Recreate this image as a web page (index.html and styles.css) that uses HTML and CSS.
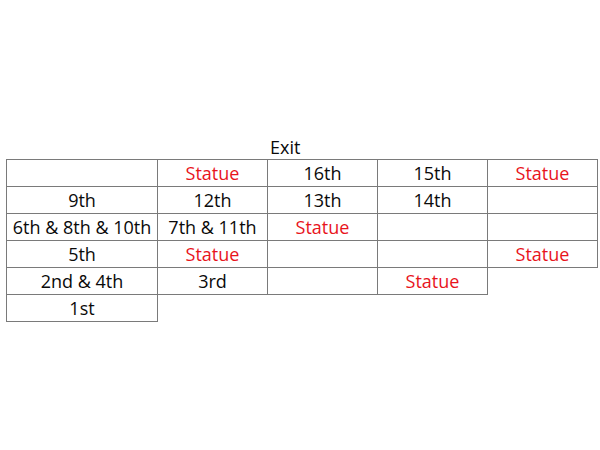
FILE: index.html
```html
<!DOCTYPE html>
<html>
<head>
<meta charset="utf-8">
<link rel="stylesheet" href="styles.css">
</head>
<body>
<div class="page">
  <div class="exit">Exit</div>
  <table class="grid">
    <colgroup>
      <col class="c1"><col class="cn"><col class="cn"><col class="cn"><col class="cn">
    </colgroup>
    <tr><td></td><td class="statue">Statue</td><td>16th</td><td>15th</td><td class="statue">Statue</td></tr>
    <tr><td>9th</td><td>12th</td><td>13th</td><td>14th</td><td></td></tr>
    <tr><td>6th &amp; 8th &amp; 10th</td><td>7th &amp; 11th</td><td class="statue">Statue</td><td></td><td></td></tr>
    <tr><td>5th</td><td class="statue">Statue</td><td></td><td></td><td class="statue">Statue</td></tr>
    <tr><td>2nd &amp; 4th</td><td>3rd</td><td></td><td class="statue">Statue</td></tr>
    <tr><td>1st</td></tr>
  </table>
</div>
</body>
</html>
```
FILE: styles.css
```css
html, body {
  margin: 0;
  padding: 0;
  background: #fff;
}
.page {
  padding-top: 136px;
  padding-left: 6px;
  font-family: "Open Sans", "Liberation Sans", sans-serif;
  font-size: 18px;
  color: #0a0a0a;
}
.exit {
  height: 23px;
  line-height: 23px;
  padding-left: 264px;
}
.grid {
  border-collapse: collapse;
  table-layout: fixed;
}
.c1 { width: 151px; }
.cn { width: 110px; }
.grid td {
  border: 1px solid #7a7a7a;
  height: 26px;
  padding: 0;
  text-align: center;
  vertical-align: middle;
  line-height: 26px;
  white-space: nowrap;
}
.statue {
  color: #e8141c;
}
```
